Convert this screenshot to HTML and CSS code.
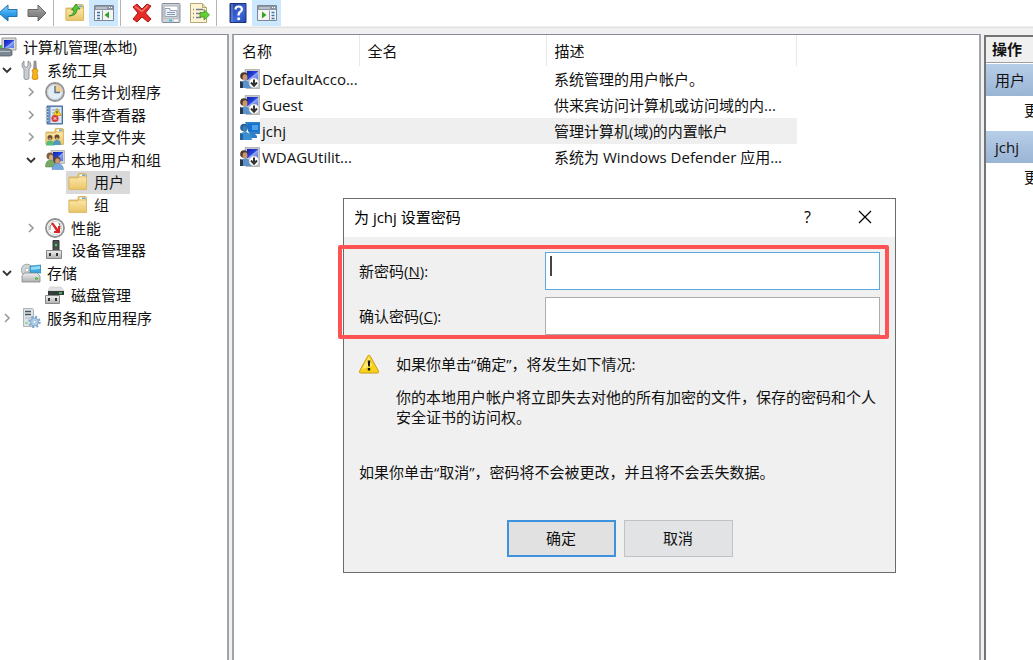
FILE: index.html
```html
<!DOCTYPE html>
<html lang="zh-CN">
<head>
<meta charset="utf-8">
<title>计算机管理</title>
<link rel="stylesheet" href="styles.css">
</head>
<body>
<svg class="defs" aria-hidden="true">
  <defs>
    <linearGradient id="g-blue" x1="0" y1="0" x2="0" y2="1"><stop offset="0" stop-color="#8fd4fb"/><stop offset=".5" stop-color="#35a5ee"/><stop offset="1" stop-color="#1576c8"/></linearGradient>
    <linearGradient id="g-gray" x1="0" y1="0" x2="0" y2="1"><stop offset="0" stop-color="#b5b5b5"/><stop offset=".5" stop-color="#8b8b8b"/><stop offset="1" stop-color="#747474"/></linearGradient>
    <linearGradient id="g-folder" x1="0" y1="0" x2="0" y2="1"><stop offset="0" stop-color="#fbe8a8"/><stop offset="1" stop-color="#e9c466"/></linearGradient>
    <linearGradient id="g-screen" x1="0" y1="0" x2="1" y2="1"><stop offset="0" stop-color="#0b1fb0"/><stop offset=".5" stop-color="#2b46dc"/><stop offset=".55" stop-color="#8fa6f5"/><stop offset="1" stop-color="#5570e6"/></linearGradient>
    <linearGradient id="g-metal" x1="0" y1="0" x2="0" y2="1"><stop offset="0" stop-color="#f0f0f0"/><stop offset="1" stop-color="#b0b0b0"/></linearGradient>
    <linearGradient id="g-help" x1="0" y1="0" x2="1" y2="1"><stop offset="0" stop-color="#1f3f9c"/><stop offset=".6" stop-color="#3f66d8"/><stop offset="1" stop-color="#2548b0"/></linearGradient>
    <symbol id="i-folder" viewBox="0 0 20 20">
      <path d="M1 5h9V2.500q0-1 1-1h6q1.500 0 1.500 1.500v14H1z" fill="#e6c36c" stroke="#d3ac55" stroke-width=".8"/>
      <path d="M11.500 2.500h5.500v2h-5.500z" fill="#fff"/><path d="M14 2.500h3v1.500h-3z" fill="#58aee8"/>
      <path d="M1 6h9l1.500-1h7v12.500H1z" fill="url(#g-folder)" stroke="#dbb866" stroke-width=".8"/>
    </symbol>
    <symbol id="i-user" viewBox="0 0 20 20">
      <path d="M5 .5h14.500v19H6z" fill="#c8c8c8" stroke="#999" stroke-width=".6"/>
      <path d="M7 2h11v9H7z" fill="url(#g-screen)"/>
      <circle cx="4" cy="7" r="3.800" fill="#4b3829"/><ellipse cx="5" cy="8.500" rx="2.400" ry="3.200" fill="#c99871"/>
      <path d="M0 19v-4q1-3.500 5-3.500t6 3.500l1 4z" fill="#5c92cb"/><path d="M0 12l3 1v6H0z" fill="#29394a"/>
      <circle cx="14" cy="14" r="5" fill="#fff" stroke="#aaa" stroke-width=".5"/>
      <path d="M14 10.500v6M11 13.500l3 3.300 3-3.300" fill="none" stroke="#333" stroke-width="2"/>
    </symbol>
    <symbol id="i-chev" viewBox="0 0 10 10"><path d="M3 1l4 4-4 4" fill="none" stroke="#9a9a9a" stroke-width="1.600"/></symbol>
    <symbol id="i-open" viewBox="0 0 10 10"><path d="M1 3l4 4 4-4" fill="none" stroke="#333" stroke-width="1.800"/></symbol>
  </defs>
</svg>

<nav class="toolbar" aria-label="工具栏">
  <button class="tool tool-back" aria-label="后退"><svg width="18" height="20" viewBox="0 0 18 20"><path d="M-1 10L8 2v4.500h9v7H8V18z" fill="url(#g-blue)" stroke="#2273ae"/></svg></button>
  <button class="tool" aria-label="前进"><svg width="20" height="20" viewBox="0 0 20 20"><path d="M19 10L11 2v4.500H1v7h10V18z" fill="url(#g-gray)" stroke="#696969"/></svg></button>
  <span class="sep"></span>
  <button class="tool" aria-label="向上"><svg width="20" height="20" viewBox="0 0 20 20"><use href="#i-folder"/><path d="M4 13q5-1 5-6H6.500L11 1l4 5h-3q0 7-8 7z" fill="#54c83c" stroke="#27821a" stroke-width=".8"/></svg></button>
  <button class="tool tool-on" aria-label="显示控制台树"><svg width="20" height="20" viewBox="0 0 20 20"><path d="M.5 2.500h19v15H.5z" fill="#f5f5f5" stroke="#7d8692"/><path d="M1 3h18v4H1z" fill="#8d97a4"/><path d="M2 5h11" stroke="#e4e8ec"/><path d="M15 4.500h1m1 0h1" stroke="#fff"/><path d="M8.500 7.500v10" stroke="#8d97a4"/><path d="M3 9.500h3m-3 3h3m-3 3h3" stroke="#3974b9" stroke-width="1.300"/><path d="M15 8.500v7L10.500 12z" fill="#35a51f"/></svg></button>
  <span class="sep"></span>
  <button class="tool" aria-label="删除"><svg width="22" height="20" viewBox="0 0 22 20"><path d="M2 4l4-3 5 5 5-5 4 2-5.500 7L20 16l-3 3-6-5-5 5-4-3 5-6z" fill="#e42b25" stroke="#b01713"/><path d="M4 3.500l7 5 6-6" fill="none" stroke="#f48079" stroke-width="1.200"/></svg></button>
  <button class="tool" aria-label="属性"><svg width="20" height="20" viewBox="0 0 20 20"><rect x="1" y=".5" width="18" height="19" rx="1" fill="#cfd3d9" stroke="#858c95"/><path d="M3 3h14v12H3z" fill="#fff" stroke="#a5abb4"/><path d="M4 5.500h5v2h7v6H4z" fill="#eef1f5" stroke="#9aa4b3"/><path d="M6 9.500h8m-8 2h8" stroke="#8399b9"/><path d="M8 17.500h3" stroke="#38b2e6" stroke-width="1.600"/><path d="M13 17.500h4" stroke="#fff" stroke-width="1.600"/></svg></button>
  <button class="tool" aria-label="导出列表"><svg width="20" height="20" viewBox="0 0 20 20"><path d="M.5.500h12l4 4v15H.5z" fill="#fcf4d2" stroke="#b5a878"/><path d="M12.500.500v4h4" fill="#e9dcae" stroke="#b5a878"/><path d="M3 6.500h1m2 0h7M3 10.500h1m2 0h5M3 14.500h1m2 0h5" stroke="#7d7b92" stroke-width="1.300"/><path d="M10 9.500h4V6.500l5.500 5.500-5.500 5v-3h-4z" fill="#63cd38" stroke="#3b951f" stroke-width=".8"/></svg></button>
  <span class="sep"></span>
  <button class="tool" aria-label="帮助"><svg width="18" height="20" viewBox="0 0 18 20"><path d="M1 .5h16v19H1z" fill="url(#g-help)" stroke="#1d3375"/><path d="M3 1v18" stroke="#7790d8"/><path d="M6.500 6.500q0-3 3.200-3t3.200 2.700q0 1.800-1.800 2.800T9.700 12.500" fill="none" stroke="#fff" stroke-width="2.200"/><circle cx="9.700" cy="15.800" r="1.500" fill="#fff"/></svg></button>
  <button class="tool tool-on" aria-label="显示操作窗格"><svg width="20" height="20" viewBox="0 0 20 20"><path d="M.5 2.500h19v15H.5z" fill="#f5f5f5" stroke="#7d8692"/><path d="M1 3h18v4H1z" fill="#8d97a4"/><path d="M2 5h11" stroke="#e4e8ec"/><path d="M15 4.500h1m1 0h1" stroke="#fff"/><path d="M12.500 7.500v10" stroke="#8d97a4"/><path d="M14.500 9.500h3m-3 3h3m-3 3h3" stroke="#3974b9" stroke-width="1.300"/><path d="M5 8.500v7L9.500 12z" fill="#35a51f"/></svg></button>
</nav>

<main class="panes">
  <section class="pane pane-tree">
    <ul class="tree">
      <li class="node root"><svg width="17" height="20" viewBox="0 0 17 20"><path d="M2 1h14v12H2z" fill="#d9d9d9" stroke="#999"/><path d="M4 3h10v8H4z" fill="url(#g-screen)"/><path d="M-1 11l10 1 3 2v4l-2 1H-1z" fill="#7b8790" stroke="#555f66" stroke-width=".8"/><path d="M0 14.500h10" stroke="#b9c3ca"/><path d="M0 8h2v3H0z" fill="#4db648"/></svg><span>计算机管理(本地)</span></li>
      <li class="node"><svg class="chev" width="10" height="10"><use href="#i-open"/></svg><svg width="20" height="20" viewBox="0 0 20 20"><path d="M3 1v5l2 1.500L7 6V1q3 1 3 4.500 0 2-2 3.500v9q0 1.500-2.500 1.500T3 18V9Q1 8 1 5.500 1 2 3 1z" fill="#c9cdd1" stroke="#7e858b" stroke-width=".8"/><path d="M13 1h2l.5 8h-3z" fill="#999" stroke="#777" stroke-width=".5"/><path d="M12 9h4l1 2-1 2 1 5q0 1.500-3 1.500T11 18l1-5-1-2z" fill="#f6b31b" stroke="#ca8408" stroke-width=".8"/></svg><span>系统工具</span></li>
      <li class="node sub"><svg class="chev" width="10" height="10"><use href="#i-chev"/></svg><svg width="20" height="20" viewBox="0 0 20 20"><circle cx="10" cy="10" r="9" fill="#e3edf5" stroke="#929292" stroke-width="1.800"/><path d="M10 10V2.500A7.500 7.500 0 0 1 17.500 10z" fill="#f2cf8b"/><circle cx="10" cy="10" r="7.500" fill="none" stroke="#bdc6ce" stroke-width=".7"/><path d="M10 4v6.500h5" fill="none" stroke="#54728e" stroke-width="1.400"/></svg><span>任务计划程序</span></li>
      <li class="node sub"><svg class="chev" width="10" height="10"><use href="#i-chev"/></svg><svg width="20" height="20" viewBox="0 0 20 20"><path d="M2 1h15.500v18H2z" fill="#6a93c4" stroke="#4b6d96"/><path d="M5.500 2h11v16h-11z" fill="#dae6f5"/><path d="M7 5h8M7 8h3m-3 3h3m-3 3h2" stroke="#8ea9ca"/><path d="M12 3.500l4.500 7h-8z" fill="#ffd41f" stroke="#ae8600" stroke-width=".6"/><path d="M12 6v2.500" stroke="#222"/><circle cx="10" cy="13.500" r="3.600" fill="#dd3d3d"/><path d="M8.800 12.300l2.400 2.400m0-2.400l-2.400 2.400" stroke="#fff"/><path d="M.5 3.500h3m-3 3h3m-3 3h3m-3 3h3m-3 3h3" stroke="#bcc7d3"/></svg><span>事件查看器</span></li>
      <li class="node sub"><svg class="chev" width="10" height="10"><use href="#i-chev"/></svg><svg width="20" height="20" viewBox="0 0 20 20"><use href="#i-folder"/><circle cx="5" cy="10.500" r="2.500" fill="#6b5137"/><path d="M1 18.500q0-5 4-5t4.500 5z" fill="#55bc79"/><circle cx="12" cy="10" r="2.500" fill="#66492f"/><path d="M8 18q0-5 4-5t4 5z" fill="#5297bc"/><path d="M4 11.500q1 1 2 0m5-.5q1 1 2 0" stroke="#e2b58c" fill="none" stroke-width="1.500"/></svg><span>共享文件夹</span></li>
      <li class="node sub"><svg class="chev" width="10" height="10"><use href="#i-open"/></svg><svg width="20" height="20" viewBox="0 0 20 20"><path d="M6 .5h13.500v13H6z" fill="#d0d0d0" stroke="#a5a5a5" stroke-width=".7"/><path d="M8 2h10v9H8z" fill="url(#g-screen)"/><circle cx="5" cy="6" r="3.500" fill="#80613b"/><ellipse cx="6" cy="7.500" rx="2" ry="2.700" fill="#ddb182"/><path d="M.5 17q0-7 5-7t5 7z" fill="#78a962" stroke="#56814b" stroke-width=".5"/><circle cx="12" cy="10" r="3.500" fill="#5b4331"/><ellipse cx="12.500" cy="11" rx="2.300" ry="2.800" fill="#cf9973"/><path d="M7 19.500q0-6 5.500-6t6 6z" fill="#74a8de" stroke="#5484b9" stroke-width=".5"/></svg><span>本地用户和组</span></li>
      <li class="node leaf"><span class="pick picked"><svg width="20" height="20"><use href="#i-folder"/></svg><span>用户</span></span></li>
      <li class="node leaf"><span class="pick"><svg width="20" height="20"><use href="#i-folder"/></svg><span>组</span></span></li>
      <li class="node sub"><svg class="chev" width="10" height="10"><use href="#i-chev"/></svg><svg width="20" height="20" viewBox="0 0 20 20"><circle cx="10" cy="10" r="9" fill="#fff" stroke="#929292" stroke-width="1.800"/><circle cx="10" cy="10" r="6.800" fill="none" stroke="#bbb" stroke-width=".7"/><path d="M5 12V8l2-2m7-1l1 3v3" stroke="#777" fill="none"/><path d="M6 5l2-.5 5 6.500V8h2v7H9v-2h2z" fill="#dd2525"/></svg><span>性能</span></li>
      <li class="node sub none"><svg width="20" height="20" viewBox="0 0 20 20"><path d="M8 .5h6v10H8z" fill="#49514e" stroke="#343b38"/><path d="M10 4h2v2h-2z" fill="#4ad957"/><path d="M1.500 10.500h15v8h-15z" fill="url(#g-metal)" stroke="#888"/><path d="M4 13h2v3H4zm7 0h2v3h-2z" fill="#333"/></svg><span>设备管理器</span></li>
      <li class="node"><svg class="chev" width="10" height="10"><use href="#i-open"/></svg><svg width="20" height="20" viewBox="0 0 20 20"><circle cx="6" cy="7" r="5.800" fill="#cfd4d4" stroke="#929999" stroke-width=".8"/><circle cx="6" cy="7" r="1.800" fill="#fff" stroke="#999" stroke-width=".6"/><path d="M9 3l11-1v8H9z" fill="#3ea7dd" stroke="#267ba7" stroke-width=".6"/><path d="M10 4l9-1v3l-9 1z" fill="#95daf5"/><path d="M1 13l2-3h13l3 3v6H1z" fill="url(#g-metal)" stroke="#828888" stroke-width=".8"/><path d="M14 14.500h3v2h-3z" fill="#42bc3a"/></svg><span>存储</span></li>
      <li class="node sub none"><svg width="20" height="20" viewBox="0 0 20 20"><path d="M5 2h11l3 4H3z" fill="#e1e1e1" stroke="#c1c1c1" stroke-width=".5"/><path d="M3 6h16v4H3z" fill="#353b38"/><path d="M14 8h3" stroke="#49e466" stroke-width="1.400"/><path d="M.5 10.500h14v8H.5z" fill="url(#g-metal)" stroke="#888"/><path d="M3 13h2v3H3zm7 0h2v3h-2z" fill="#333"/></svg><span>磁盘管理</span></li>
      <li class="node"><svg class="chev" width="10" height="10"><use href="#i-chev"/></svg><svg width="20" height="20" viewBox="0 0 20 20"><path d="M2.500.500h9l1 1v17h-10z" fill="#dee3e5" stroke="#9ba4aa" stroke-width=".8"/><path d="M4 3.500h6m-6 3h6" stroke="#49555e" stroke-width="1.300"/><path d="M4 10h6" stroke="#abb4bb"/><path d="M4 15h3" stroke="#63c46c"/><circle cx="13.500" cy="14" r="4" fill="#b4cee8" stroke="#7aa4cc"/><circle cx="13.500" cy="14" r="5.300" fill="none" stroke="#7aa4cc" stroke-width="1.800" stroke-dasharray="2 2.160"/><circle cx="13.500" cy="14" r="1.500" fill="#fff" stroke="#7aa4cc" stroke-width=".5"/></svg><span>服务和应用程序</span></li>
    </ul>
  </section>

  <section class="pane pane-list">
    <table class="users">
      <colgroup><col class="col-name"><col class="col-full"><col class="col-desc"></colgroup>
      <thead><tr><th>名称</th><th>全名</th><th>描述</th></tr></thead>
      <tbody>
        <tr><td><span class="name"><svg width="20" height="20"><use href="#i-user"/></svg>DefaultAcco...</span></td><td></td><td>系统管理的用户帐户。</td></tr>
        <tr><td><span class="name"><svg width="20" height="20"><use href="#i-user"/></svg>Guest</span></td><td></td><td>供来宾访问计算机或访问域的内...</td></tr>
        <tr class="current"><td><span class="name"><svg width="20" height="20" viewBox="0 0 20 20"><path d="M5 1h15v12h-5l2 2v2h-6z" fill="#317fc4"/><path d="M8 2.500h11v8H8z" fill="#1670cf"/><path d="M12 4h6v5h-6z" fill="#4fa0e6"/><circle cx="4" cy="6.500" r="3.800" fill="#2a659b"/><ellipse cx="5" cy="8" rx="2.200" ry="3" fill="#3c80b8"/><path d="M0 19v-5q1-3 5-3t6 4l1 4z" fill="#398fcf"/><path d="M0 12l3 1v6H0z" fill="#236399"/></svg>jchj</span></td><td></td><td>管理计算机(域)的内置帐户</td></tr>
        <tr><td><span class="name"><svg width="20" height="20"><use href="#i-user"/></svg>WDAGUtilit...</span></td><td></td><td>系统为 Windows Defender 应用...</td></tr>
      </tbody>
    </table>
  </section>

  <aside class="pane pane-actions">
    <h2 class="actions-title">操作</h2>
    <h3 class="group">用户</h3>
    <p class="more">更</p>
    <h3 class="group">jchj</h3>
    <p class="more">更</p>
  </aside>
</main>

<form class="dialog" role="dialog" aria-labelledby="dlg-title">
  <header class="titlebar">
    <h1 id="dlg-title" class="dialog-title">为 jchj 设置密码</h1>
    <button type="button" class="caption" aria-label="帮助">?</button>
    <button type="button" class="caption" aria-label="关闭"><svg width="14" height="14" viewBox="0 0 14 14"><path d="M1 1l12 12M13 1L1 13" stroke="#000" stroke-width="1.200"/></svg></button>
  </header>
  <div class="dialog-body">
    <div class="fields">
      <label for="pw">新密码(<u>N</u>):</label>
      <div class="box"><input id="pw" class="field active" type="password"><span class="caret"></span></div>
      <label for="pw2">确认密码(<u>C</u>):</label>
      <div class="box"><input id="pw2" class="field" type="password"></div>
    </div>
    <div class="warning">
      <svg width="20" height="20" viewBox="1 0 20 20"><path d="M11 1.200q.8 0 1.300 1l8.200 15q.6 1.800-1 1.800h-17q-1.600 0-1-1.800l8.200-15q.5-1 1.300-1z" fill="#f8d21c" stroke="#c99c10"/><path d="M11 2.500L4 15l10-3z" fill="#fdeb74"/><path d="M9.700 6.500h2.600l-.5 6h-1.600zM9.800 14h2.400v2.400H9.800z" fill="#111"/></svg>
      <div>
        <p class="lead">如果你单击“确定”，将发生如下情况:</p>
        <p>你的本地用户帐户将立即失去对他的所有加密的文件，保存的密码和个人安全证书的访问权。</p>
      </div>
    </div>
    <p class="cancel-note">如果你单击“取消”，密码将不会被更改，并且将不会丢失数据。</p>
    <div class="buttons">
      <button type="submit" class="btn btn-default">确定</button>
      <button type="button" class="btn">取消</button>
    </div>
  </div>
</form>
</body>
</html>
```
FILE: styles.css
```css
* { box-sizing: border-box; }

body {
  margin: 0;
  height: 100vh;
  display: flex;
  flex-direction: column;
  overflow: hidden;
  position: relative;
  background: #f0f0f0;
  color: #111;
  font: 15px/20px "Open Sans", "Noto Sans CJK SC", sans-serif;
}

button, input { font: inherit; color: inherit; }
h1, h2, h3, p, ul { margin: 0; padding: 0; font-size: inherit; font-weight: normal; }
svg { flex: none; display: block; }
.defs { position: absolute; width: 0; height: 0; }

/* Toolbar */
.toolbar {
  display: flex;
  height: 26px;
  flex: none;
  background: #fff;
}
.tool {
  width: 29px;
  padding: 0;
  border: 0;
  background: none;
  display: flex;
  align-items: center;
  justify-content: center;
}
.tool-back { width: 22px; justify-content: flex-start; }
.tool-on { background: #cce8ff; }
.sep { width: 1px; margin: 0 6px 0 2px; background: #b5b5b5; }

/* Panes */
.panes {
  flex: 1;
  min-height: 0;
  display: flex;
  gap: 3px;
  margin-top: 1px;
  padding-top: 6px;
  border-top: 1px solid #e2e2e2;
}
.pane { background: #fff; border: 1px solid #868b95; border-bottom: 0; overflow: hidden; }
.pane-tree { flex: 0 0 229px; border-left: 0; border-right-width: 2px; border-right-color: #a0a4ab; }
.pane-list { flex: 1; border-width: 1px 2px 0; border-left-color: #a0a4ab; border-right-color: #a0a4ab; }
.pane-actions { flex: 0 0 49px; margin-top: 1px; border: 2px solid #747474; border-right: 0; border-bottom: 0; }

/* Console tree: all rows share the height equally */
.tree {
  list-style: none;
  min-height: 293px;
  margin-top: 1px;
  display: grid;
  grid-auto-rows: 1fr;
}
.node { display: flex; align-items: center; gap: 6px; white-space: nowrap; }
.chev { margin: 0 1px 0 2px; }
.node .chev + svg { margin-left: 2px; }
.sub { padding-left: 24px; }
.none { padding-left: 45px; }
.leaf { padding-left: 66px; }
.pick { display: flex; align-items: center; align-self: stretch; gap: 6px; padding: 0 6px 0 2px; }
.picked { background: #d9d9d9; }

/* User list */
.users { width: 563px; table-layout: fixed; border-collapse: collapse; text-align: left; }
.col-name { width: 125px; }
.col-full { width: 187px; }
.users th {
  height: 31px;
  padding: 0 8px;
  font-weight: normal;
  border-right: 1px solid #e8e8e8;
}
.users td { height: 26px; padding: 0 8px; white-space: nowrap; }
.users td:first-child { padding: 0 0 0 6px; }
.name { display: flex; align-items: center; gap: 2px; }
.current td { background: #efefef; }
.current td:first-child { background: linear-gradient(to right, #fff 26px, #efefef 26px); }

/* Actions */
.actions-title {
  height: 26px;
  padding: 2px 6px;
  background: #f0f0f0;
  border-bottom: 1px solid #a0a0a0;
  font-weight: bold;
}
.group {
  margin-top: 1px;
  padding: 6px 0 6px 9px;
  background: linear-gradient(#b7cee8, #9ab4d4);
  white-space: nowrap;
}
.more { padding: 4px 0 10px 38px; }

/* Dialog */
.dialog {
  position: absolute;
  left: 343px;
  top: 198px;
  width: 553px;
  background: #f0f0f0;
  border: 1px solid #6b6b6b;
}
.titlebar { display: flex; align-items: center; height: 38px; padding: 0 2px 2px 10px; background: #fff; color: #000; }
.dialog-title { flex: 1; }
.caption {
  width: 57px;
  padding: 0;
  border: 0;
  background: none;
  display: flex;
  justify-content: center;
  font-size: 16px;
}
.dialog-body { padding: 15px; }
.fields {
  position: relative;
  display: grid;
  grid-template-columns: 186px 1fr;
  gap: 7px 0;
  align-items: center;
}
/* Highlight frame drawn over the dialog edge */
.fields::after {
  content: "";
  position: absolute;
  inset: -7px -9px -4px -21px;
  border: 4px solid #ff5252;
  border-radius: 2px;
  pointer-events: none;
}
.box { position: relative; }
.field {
  display: block;
  width: 100%;
  height: 38px;
  padding: 0 6px;
  border: 1px solid #adadad;
  background: #fff;
  outline: 0;
}
.active { border-color: #5ba7e0; }
.caret { position: absolute; left: 5px; top: 4px; width: 2px; height: 20px; background: #444; }
.warning { display: flex; gap: 17px; margin-top: 19px; }
.lead { margin-bottom: 13px; }
.cancel-note { margin-top: 35px; }
.buttons { display: flex; justify-content: center; gap: 8px; margin-top: 38px; }
.btn { width: 109px; height: 37px; padding: 0 0 2px; border: 1px solid #bfc2c7; background: #e1e3e5; }
.btn-default { border: 2px solid #3e93dc; background: #e1e1e1; }
```
